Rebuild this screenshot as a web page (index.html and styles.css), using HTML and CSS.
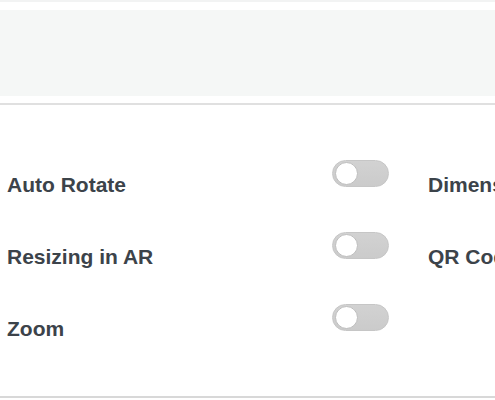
FILE: index.html
```html
<!DOCTYPE html>
<html lang="en">
<head>
<meta charset="utf-8">
<title>Viewer settings</title>
<link rel="stylesheet" href="styles.css">
</head>
<body>
  <div class="topbar"></div>
  <div class="preview"></div>
  <section class="settings">
    <div class="grid">
      <div class="item">
        <span class="label">Auto Rotate</span>
        <span class="toggle"><span class="knob"></span></span>
      </div>
      <div class="item">
        <span class="label">Dimensions</span>
        <span class="toggle"><span class="knob"></span></span>
      </div>
      <div class="item">
        <span class="label">Resizing in AR</span>
        <span class="toggle"><span class="knob"></span></span>
      </div>
      <div class="item">
        <span class="label">QR Code</span>
        <span class="toggle"><span class="knob"></span></span>
      </div>
      <div class="item">
        <span class="label">Zoom</span>
        <span class="toggle"><span class="knob"></span></span>
      </div>
    </div>
  </section>
</body>
</html>
```
FILE: styles.css
```css
html, body {
  margin: 0;
  padding: 0;
  background: #ffffff;
  overflow: hidden;
}
body {
  width: 495px;
  font-family: "Liberation Sans", Arial, sans-serif;
  color: #3c434a;
}
.topbar {
  height: 2px;
  background: #f2f3f3;
}
.preview {
  height: 86px;
  margin-top: 8px;
  background: #f5f7f6;
  margin-bottom: 7px;
}
.settings {
  border-top: 2px solid #e0e0e0;
  border-bottom: 2px solid #d8d8d8;
  padding: 55px 0 55px 7px;
}
.grid {
  display: grid;
  grid-template-columns: 382px 382px;
  column-gap: 39px;
  row-gap: 35px;
}
.item {
  display: flex;
  justify-content: space-between;
  align-items: flex-start;
  height: 37px;
}
.label {
  margin-top: 13px;
  font-size: 21px;
  line-height: 24px;
  font-weight: 700;
  white-space: nowrap;
}
.toggle {
  position: relative;
  box-sizing: border-box;
  width: 57px;
  height: 27px;
  border-radius: 14px;
  background: linear-gradient(#d2d2d2, #cbcbcb);
  border: 1px solid #c6c6c6;
  flex: none;
}
.knob {
  position: absolute;
  left: 2px;
  top: 1px;
  box-sizing: border-box;
  width: 23px;
  height: 23px;
  border-radius: 50%;
  background: #ffffff;
  border: 1px solid #bdbdbd;
}
```
